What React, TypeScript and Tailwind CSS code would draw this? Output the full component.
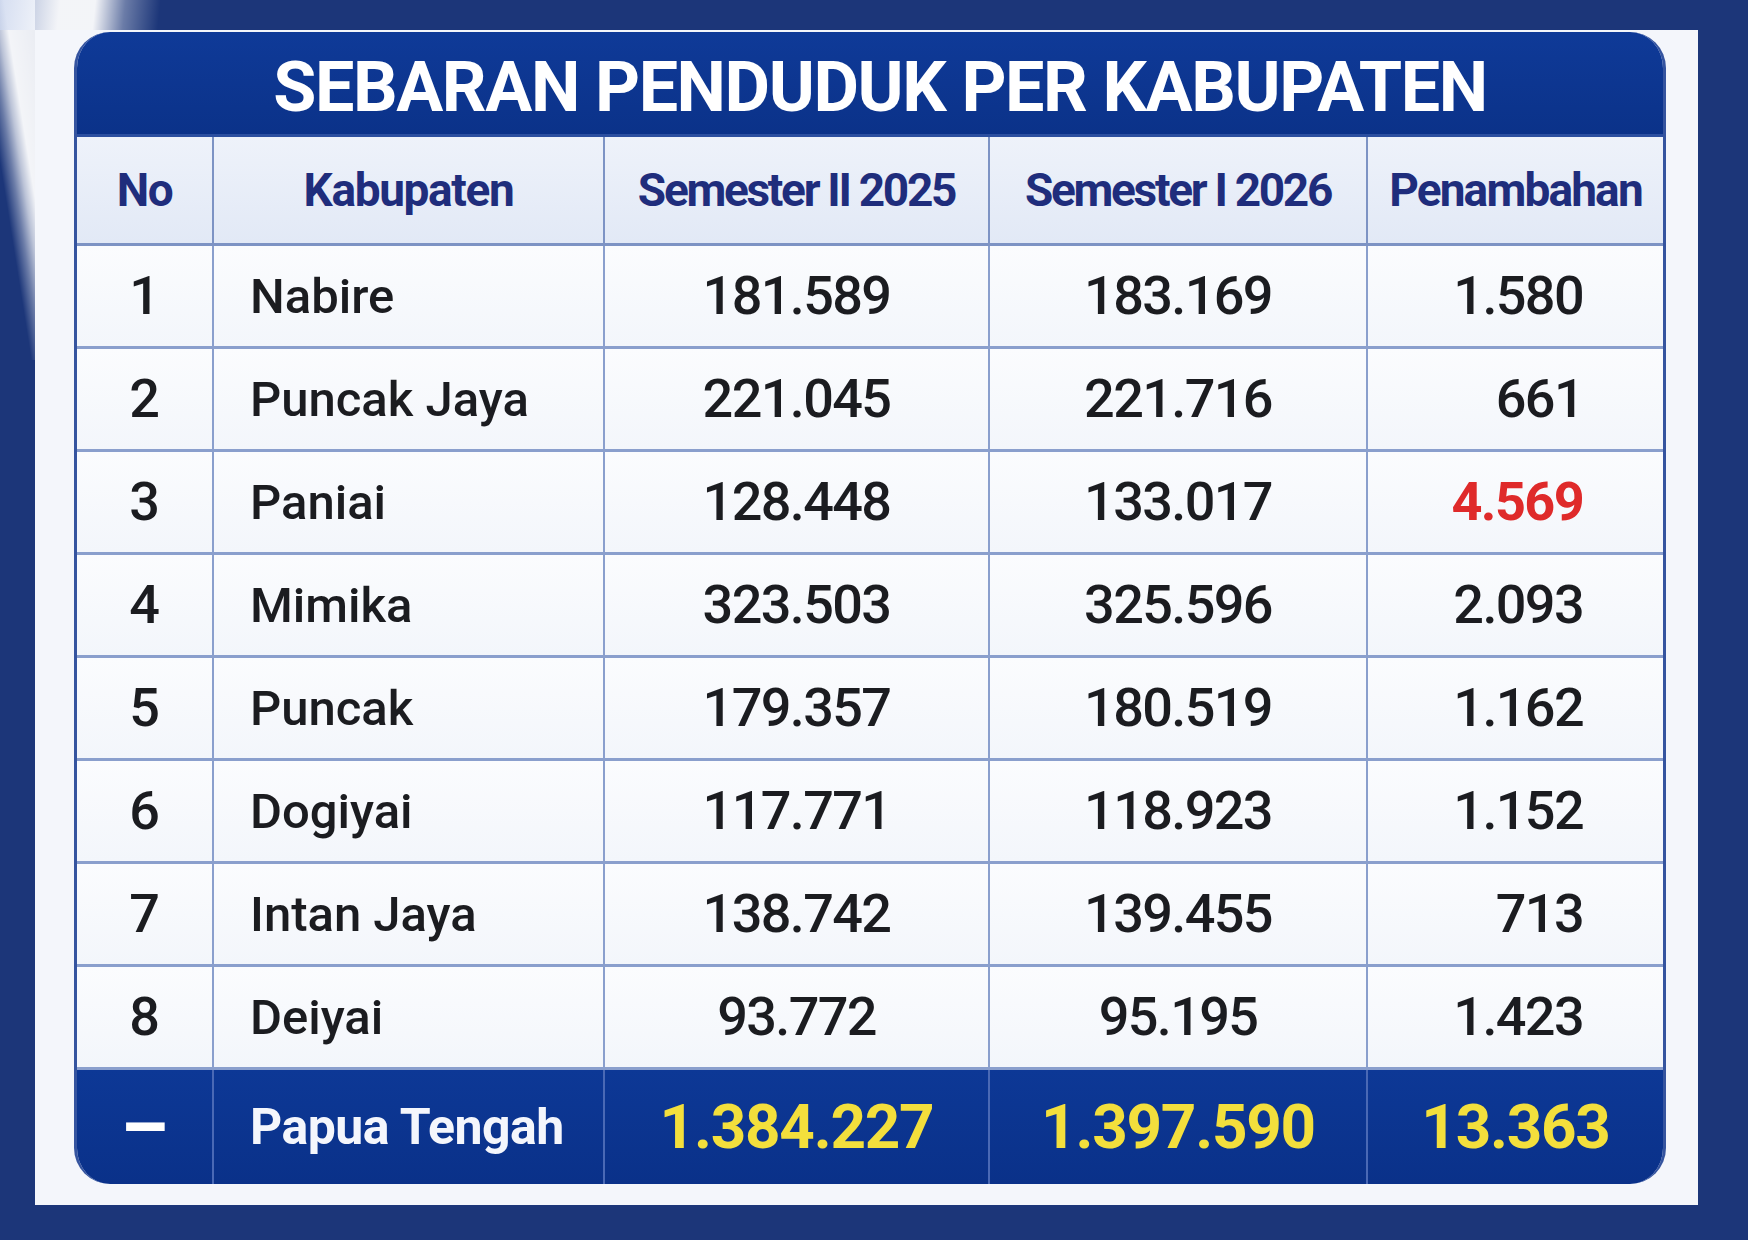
import React from "react";

const rows = [
  { no: "1", name: "Nabire", a: "181.589", b: "183.169", c: "1.580" },
  { no: "2", name: "Puncak Jaya", a: "221.045", b: "221.716", c: "661" },
  { no: "3", name: "Paniai", a: "128.448", b: "133.017", c: "4.569", red: true },
  { no: "4", name: "Mimika", a: "323.503", b: "325.596", c: "2.093" },
  { no: "5", name: "Puncak", a: "179.357", b: "180.519", c: "1.162" },
  { no: "6", name: "Dogiyai", a: "117.771", b: "118.923", c: "1.152" },
  { no: "7", name: "Intan Jaya", a: "138.742", b: "139.455", c: "713" },
  { no: "8", name: "Deiyai", a: "93.772", b: "95.195", c: "1.423" },
];

const cols = "grid grid-cols-[137px_391px_385px_378px_1fr]";

export default function App() {
  return (
    <div
      className="relative w-[1748px] h-[1240px] overflow-hidden bg-[#1c3679] pl-[35px] pt-[30px] pr-[50px] pb-[35px]"
      style={{ fontFamily: "Roboto, 'Liberation Sans', Arial, sans-serif" }}
    >
      {/* light streak: left strip */}
      <div className="absolute left-0 top-0 w-[35px] h-[360px] bg-[linear-gradient(81deg,rgba(255,255,255,0)_0%,rgba(255,255,255,0)_34%,rgba(255,255,255,0.35)_46%,rgba(255,255,255,0.7)_56%,rgba(255,255,255,0.95)_66%,rgba(255,255,255,0.9)_100%)] pointer-events-none" />
      {/* light streak: top strip */}
      <div className="absolute left-0 top-0 w-[190px] h-[30px] bg-[linear-gradient(96deg,rgba(200,212,238,0.7)_0px,rgba(255,255,255,0.95)_60px,rgba(255,255,255,0.95)_95px,rgba(255,255,255,0.35)_125px,rgba(255,255,255,0)_160px)] pointer-events-none" />
      <div className="relative h-full w-full bg-[#f4f6fb] pl-[39px] pt-[2px] pr-[32px] pb-[21px]">
        <div className="h-full w-full rounded-[36px] overflow-hidden flex flex-col border-x-[3px] border-[#35549f] bg-[#f7f9fd]">
          {/* Title */}
          <div className="h-[105px] shrink-0 flex items-center justify-center pt-[8px] bg-[linear-gradient(180deg,#0f3a98_0%,#0b3289_100%)] border-b-[3px] border-[#2c4fa0]">
            <span className="text-white font-bold text-[70px] tracking-[-0.02em] leading-none pl-[20px]">
              SEBARAN PENDUDUK PER KABUPATEN
            </span>
          </div>
          {/* Header */}
          <div className={`${cols} h-[109px] shrink-0 bg-[linear-gradient(180deg,#eef2fa_0%,#e2e9f6_100%)] border-b-[3px] border-[#7d93c4] text-[#1f2d7c] font-bold text-[46px] tracking-[-0.03em] leading-none`}>
            <div className="flex items-center justify-center border-r-[2px] border-[#7d93c4]">No</div>
            <div className="flex items-center justify-center border-r-[2px] border-[#7d93c4]">Kabupaten</div>
            <div className="flex items-center justify-center border-r-[2px] border-[#7d93c4] tracking-[-0.05em]">Semester II 2025</div>
            <div className="flex items-center justify-center border-r-[2px] border-[#7d93c4] tracking-[-0.05em]">Semester I 2026</div>
            <div className="flex items-center justify-center tracking-[-0.04em]">Penambahan</div>
          </div>
          {/* Body */}
          {rows.map((r) => (
            <div
              key={r.no}
              className={`${cols} h-[103px] shrink-0 border-b-[3px] border-[#8a9fcd] bg-[linear-gradient(180deg,#fbfcfe_0%,#f3f6fb_100%)] text-[#1b1c20] font-medium leading-none`}
            >
              <div className="flex items-center justify-center border-r-[2px] border-[#8a9fcd] text-[54px]">{r.no}</div>
              <div className="flex items-center pl-[36px] border-r-[2px] border-[#8a9fcd] text-[49px]">{r.name}</div>
              <div className="flex items-center justify-center border-r-[2px] border-[#8a9fcd] text-[54px] tracking-[-0.03em]">{r.a}</div>
              <div className="flex items-center justify-center border-r-[2px] border-[#8a9fcd] text-[54px] tracking-[-0.03em]">{r.b}</div>
              <div className={`flex items-center justify-end pr-[80px] text-[54px] tracking-[-0.03em] ${r.red ? "text-[#df2a2a] font-bold" : ""}`}>{r.c}</div>
            </div>
          ))}
          {/* Footer */}
          <div className={`${cols} flex-1 bg-[linear-gradient(180deg,#0d3896_0%,#0a3189_100%)] leading-none`}>
            <div className="flex items-center justify-center border-r-[2px] border-[#4a69b5] text-white font-bold text-[76px]">–</div>
            <div className="flex items-center pl-[36px] border-r-[2px] border-[#4a69b5] text-[#f4f6fc] font-bold text-[50px] tracking-[-0.01em]">Papua Tengah</div>
            <div className="flex items-center justify-center border-r-[2px] border-[#4a69b5] text-[#f3df3c] font-bold text-[62px] tracking-[-0.02em]">1.384.227</div>
            <div className="flex items-center justify-center border-r-[2px] border-[#4a69b5] text-[#f3df3c] font-bold text-[62px] tracking-[-0.02em]">1.397.590</div>
            <div className="flex items-center justify-center text-[#f3df3c] font-bold text-[62px] tracking-[-0.02em]">13.363</div>
          </div>
        </div>
      </div>
    </div>
  );
}
